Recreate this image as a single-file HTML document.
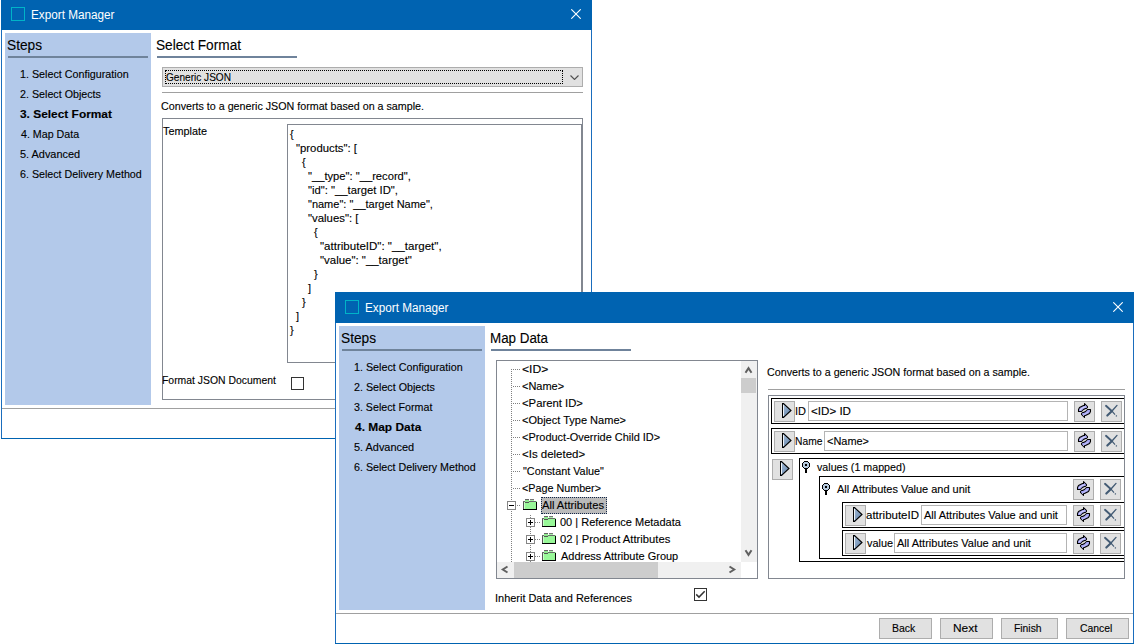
<!DOCTYPE html><html><head><meta charset="utf-8"><style>
html,body{margin:0;padding:0;background:#fff;width:1134px;height:644px;overflow:hidden;position:relative}
.a{position:absolute}
.t{white-space:pre;font-family:'Liberation Sans',sans-serif;font-size:11px;line-height:20px;color:#000;transform-origin:0 0;-webkit-text-stroke:0.12px currentColor}
</style></head><body>
<div class="a" style="left:1px;top:-1px;width:591px;height:440px;background:#fff;"></div>
<div class="a" style="left:1px;top:-1px;width:591px;height:31px;background:#0063b1;"></div>
<div class="a" style="left:1px;top:30px;width:1px;height:409px;background:#1a6dbd;"></div>
<div class="a" style="left:591px;top:30px;width:1px;height:409px;background:#1a6dbd;"></div>
<div class="a" style="left:1px;top:438px;width:591px;height:1px;background:#0063b1;"></div>
<div class="a" style="left:11px;top:7px;width:14px;height:14px;box-sizing:border-box;border:1px solid #00b4c8;"></div>
<div class="a t" style="left:31px;top:5px;font-size:12px;color:#fff;-webkit-text-stroke:0px currentColor;transform:scaleX(0.9782);">Export Manager</div>
<svg class="a" style="left:571px;top:9px;" width="10" height="10" viewBox="0 0 10 10"><path d="M0.3 0.3L9.7 9.7M9.7 0.3L0.3 9.7" stroke="#fff" stroke-width="1.1"/></svg>
<div class="a" style="left:5px;top:33px;width:146px;height:372px;background:#b3c9ea;"></div>
<div class="a t" style="left:7px;top:35px;font-size:14px;transform:scaleX(0.9777);">Steps</div>
<div class="a" style="left:8px;top:56px;width:140px;height:2px;background:#6f839b;"></div>
<div class="a t" style="left:20px;top:64px;transform:scaleX(0.9760);">1. Select Configuration</div>
<div class="a t" style="left:20px;top:84px;transform:scaleX(0.9733);">2. Select Objects</div>
<div class="a t" style="left:20px;top:104px;font-weight:bold;transform:scaleX(1.0820);">3. Select Format</div>
<div class="a t" style="left:21px;top:124px;transform:scaleX(0.9705);">4. Map Data</div>
<div class="a t" style="left:20px;top:144px;transform:scaleX(0.9932);">5. Advanced</div>
<div class="a t" style="left:20px;top:164px;transform:scaleX(0.9712);">6. Select Delivery Method</div>
<div class="a" style="left:2px;top:408px;width:589px;height:1px;background:#a0a0a0;"></div>
<div class="a t" style="left:156px;top:35px;font-size:14px;transform:scaleX(0.9758);">Select Format</div>
<div class="a" style="left:157px;top:56px;width:140px;height:2px;background:#6f839b;"></div>
<div class="a" style="left:162px;top:67px;width:421px;height:20px;background:#e1e1e1;box-sizing:border-box;border:1px solid #adadad;"></div>
<div class="a" style="left:165px;top:70px;width:398px;height:14px;box-sizing:border-box;border:1px dotted #000;"></div>
<div class="a t" style="left:166px;top:67px;transform:scaleX(0.9163);">Generic JSON</div>
<svg class="a" style="left:570px;top:75px;" width="9" height="5" viewBox="0 0 9 5"><path d="M0.5 0.5L4.5 4.5L8.5 0.5" stroke="#505050" stroke-width="1.1" fill="none"/></svg>
<div class="a" style="left:162px;top:92px;width:421px;height:1px;background:#a0a0a0;"></div>
<div class="a t" style="left:161px;top:96px;transform:scaleX(0.9732);">Converts to a generic JSON format based on a sample.</div>
<div class="a" style="left:162px;top:118px;width:421px;height:282px;box-sizing:border-box;border:1px solid #828790;"></div>
<div class="a t" style="left:163px;top:121px;transform:scaleX(0.9853);">Template</div>
<div class="a" style="left:287px;top:124px;width:295px;height:239px;background:#fff;box-sizing:border-box;border:1px solid #828790;"></div>
<div class="a t" style="left:290px;top:124px;">{</div>
<div class="a t" style="left:296px;top:138px;transform:scaleX(1.0301);">&quot;products&quot;: [</div>
<div class="a t" style="left:302px;top:152px;">{</div>
<div class="a t" style="left:308px;top:166px;transform:scaleX(1.0167);">&quot;__type&quot;: &quot;__record&quot;,</div>
<div class="a t" style="left:308px;top:180px;transform:scaleX(1.0245);">&quot;id&quot;: &quot;__target ID&quot;,</div>
<div class="a t" style="left:308px;top:194px;transform:scaleX(0.9988);">&quot;name&quot;: &quot;__target Name&quot;,</div>
<div class="a t" style="left:308px;top:208px;transform:scaleX(1.0346);">&quot;values&quot;: [</div>
<div class="a t" style="left:314px;top:222px;">{</div>
<div class="a t" style="left:320px;top:236px;transform:scaleX(1.0491);">&quot;attributeID&quot;: &quot;__target&quot;,</div>
<div class="a t" style="left:320px;top:250px;transform:scaleX(1.0399);">&quot;value&quot;: &quot;__target&quot;</div>
<div class="a t" style="left:314px;top:264px;">}</div>
<div class="a t" style="left:308px;top:278px;">]</div>
<div class="a t" style="left:302px;top:292px;">}</div>
<div class="a t" style="left:296px;top:306px;">]</div>
<div class="a t" style="left:290px;top:320px;">}</div>
<div class="a t" style="left:162px;top:370px;transform:scaleX(0.9463);">Format JSON Document</div>
<div class="a" style="left:291px;top:377px;width:13px;height:13px;background:#fff;box-sizing:border-box;border:1px solid #333;"></div>
<div class="a" style="left:335px;top:292px;width:799px;height:352px;background:#fff;"></div>
<div class="a" style="left:335px;top:292px;width:799px;height:31px;background:#0063b1;"></div>
<div class="a" style="left:335px;top:323px;width:1px;height:321px;background:#1a6dbd;"></div>
<div class="a" style="left:1133px;top:323px;width:1px;height:321px;background:#1a6dbd;"></div>
<div class="a" style="left:335px;top:643px;width:799px;height:1px;background:#0063b1;"></div>
<div class="a" style="left:345px;top:300px;width:14px;height:14px;box-sizing:border-box;border:1px solid #00b4c8;"></div>
<div class="a t" style="left:365px;top:298px;font-size:12px;color:#fff;-webkit-text-stroke:0px currentColor;transform:scaleX(0.9782);">Export Manager</div>
<svg class="a" style="left:1113px;top:302px;" width="10" height="10" viewBox="0 0 10 10"><path d="M0.3 0.3L9.7 9.7M9.7 0.3L0.3 9.7" stroke="#fff" stroke-width="1.1"/></svg>
<div class="a" style="left:339px;top:326px;width:146px;height:284px;background:#b3c9ea;"></div>
<div class="a t" style="left:341px;top:328px;font-size:14px;transform:scaleX(0.9777);">Steps</div>
<div class="a" style="left:342px;top:349px;width:140px;height:2px;background:#6f839b;"></div>
<div class="a t" style="left:354px;top:357px;transform:scaleX(0.9760);">1. Select Configuration</div>
<div class="a t" style="left:354px;top:377px;transform:scaleX(0.9733);">2. Select Objects</div>
<div class="a t" style="left:354px;top:397px;transform:scaleX(0.9709);">3. Select Format</div>
<div class="a t" style="left:355px;top:417px;font-weight:bold;transform:scaleX(1.0841);">4. Map Data</div>
<div class="a t" style="left:354px;top:437px;transform:scaleX(0.9932);">5. Advanced</div>
<div class="a t" style="left:354px;top:457px;transform:scaleX(0.9712);">6. Select Delivery Method</div>
<div class="a" style="left:336px;top:613px;width:797px;height:1px;background:#a0a0a0;"></div>
<div class="a t" style="left:490px;top:328px;font-size:14px;transform:scaleX(0.9560);">Map Data</div>
<div class="a" style="left:491px;top:349px;width:140px;height:2px;background:#6f839b;"></div>
<div class="a" style="left:496px;top:360px;width:262px;height:219px;background:#fff;box-sizing:border-box;border:1px solid #828790;"></div>
<div class="a" style="left:497px;top:361px;width:244px;height:201px;overflow:hidden">
<div class="a" style="left:14px;top:8px;width:1px;height:193px;background:repeating-linear-gradient(#808080 0 1px,transparent 1px 2px)"></div>
<div class="a" style="left:16px;top:8px;width:7px;height:1px;background:repeating-linear-gradient(90deg,#808080 0 1px,transparent 1px 2px)"></div>
<div class="a t" style="left:25px;top:-2px;transform:scaleX(1.1030);">&lt;ID&gt;</div>
<div class="a" style="left:16px;top:25px;width:7px;height:1px;background:repeating-linear-gradient(90deg,#808080 0 1px,transparent 1px 2px)"></div>
<div class="a t" style="left:25px;top:15px;transform:scaleX(0.9979);">&lt;Name&gt;</div>
<div class="a" style="left:16px;top:42px;width:7px;height:1px;background:repeating-linear-gradient(90deg,#808080 0 1px,transparent 1px 2px)"></div>
<div class="a t" style="left:25px;top:32px;transform:scaleX(1.0279);">&lt;Parent ID&gt;</div>
<div class="a" style="left:16px;top:59px;width:7px;height:1px;background:repeating-linear-gradient(90deg,#808080 0 1px,transparent 1px 2px)"></div>
<div class="a t" style="left:25px;top:49px;transform:scaleX(1.0021);">&lt;Object Type Name&gt;</div>
<div class="a" style="left:16px;top:76px;width:7px;height:1px;background:repeating-linear-gradient(90deg,#808080 0 1px,transparent 1px 2px)"></div>
<div class="a t" style="left:25px;top:66px;transform:scaleX(0.9956);">&lt;Product-Override Child ID&gt;</div>
<div class="a" style="left:16px;top:93px;width:7px;height:1px;background:repeating-linear-gradient(90deg,#808080 0 1px,transparent 1px 2px)"></div>
<div class="a t" style="left:25px;top:83px;transform:scaleX(1.0430);">&lt;Is deleted&gt;</div>
<div class="a" style="left:16px;top:110px;width:7px;height:1px;background:repeating-linear-gradient(90deg,#808080 0 1px,transparent 1px 2px)"></div>
<div class="a t" style="left:26px;top:100px;transform:scaleX(0.9844);">&quot;Constant Value&quot;</div>
<div class="a" style="left:16px;top:127px;width:7px;height:1px;background:repeating-linear-gradient(90deg,#808080 0 1px,transparent 1px 2px)"></div>
<div class="a t" style="left:25px;top:117px;transform:scaleX(0.9783);">&lt;Page Number&gt;</div>
<div class="a" style="left:10px;top:140px;width:9px;height:9px;background:#fff;box-sizing:border-box;border:1px solid #858585;"></div>
<div class="a" style="left:12px;top:144px;width:5px;height:1px;background:#000;"></div>
<div class="a" style="left:20px;top:144px;width:4px;height:1px;background:repeating-linear-gradient(90deg,#808080 0 1px,transparent 1px 2px)"></div>
<svg class="a" style="left:26px;top:138px;shape-rendering:crispEdges" width="14" height="11" viewBox="0 0 14 11"><rect x="0" y="2" width="14" height="9" fill="#98f898"/><rect x="1" y="3" width="1" height="7" fill="#c8ffc8"/><rect x="0" y="2" width="1" height="9" fill="#555"/><rect x="0" y="2" width="13" height="1" fill="#6a6a6a"/><rect x="13" y="3" width="1" height="8" fill="#000"/><rect x="0" y="10" width="14" height="1" fill="#000"/><rect x="2" y="0" width="4" height="1" fill="#666"/><rect x="2" y="1" width="4" height="2" fill="#8ee88e"/><rect x="2" y="3" width="4" height="1" fill="#555"/><rect x="7" y="0" width="4" height="1" fill="#777"/><rect x="7" y="1" width="4" height="1" fill="#a8f0a8"/></svg>
<div class="a" style="left:44px;top:136px;width:66px;height:17px;background:#bababa;box-sizing:border-box;border:1px dotted #14284a;"></div>
<div class="a t" style="left:45px;top:134px;transform:scaleX(1.0135);">All Attributes</div>
<div class="a" style="left:33px;top:154px;width:1px;height:47px;background:repeating-linear-gradient(#808080 0 1px,transparent 1px 2px)"></div>
<div class="a" style="left:29px;top:157px;width:9px;height:9px;background:#fff;box-sizing:border-box;border:1px solid #858585;"></div>
<div class="a" style="left:31px;top:161px;width:5px;height:1px;background:#000;"></div>
<div class="a" style="left:33px;top:159px;width:1px;height:5px;background:#000;"></div>
<div class="a" style="left:38px;top:161px;width:5px;height:1px;background:repeating-linear-gradient(90deg,#808080 0 1px,transparent 1px 2px)"></div>
<svg class="a" style="left:45px;top:155px;shape-rendering:crispEdges" width="14" height="11" viewBox="0 0 14 11"><rect x="0" y="2" width="14" height="9" fill="#98f898"/><rect x="1" y="3" width="1" height="7" fill="#c8ffc8"/><rect x="0" y="2" width="1" height="9" fill="#555"/><rect x="0" y="2" width="13" height="1" fill="#6a6a6a"/><rect x="13" y="3" width="1" height="8" fill="#000"/><rect x="0" y="10" width="14" height="1" fill="#000"/><rect x="2" y="0" width="4" height="1" fill="#666"/><rect x="2" y="1" width="4" height="2" fill="#8ee88e"/><rect x="2" y="3" width="4" height="1" fill="#555"/><rect x="7" y="0" width="4" height="1" fill="#777"/><rect x="7" y="1" width="4" height="1" fill="#a8f0a8"/></svg>
<div class="a t" style="left:63px;top:151px;transform:scaleX(1.0001);">00 | Reference Metadata</div>
<div class="a" style="left:29px;top:174px;width:9px;height:9px;background:#fff;box-sizing:border-box;border:1px solid #858585;"></div>
<div class="a" style="left:31px;top:178px;width:5px;height:1px;background:#000;"></div>
<div class="a" style="left:33px;top:176px;width:1px;height:5px;background:#000;"></div>
<div class="a" style="left:38px;top:178px;width:5px;height:1px;background:repeating-linear-gradient(90deg,#808080 0 1px,transparent 1px 2px)"></div>
<svg class="a" style="left:45px;top:172px;shape-rendering:crispEdges" width="14" height="11" viewBox="0 0 14 11"><rect x="0" y="2" width="14" height="9" fill="#98f898"/><rect x="1" y="3" width="1" height="7" fill="#c8ffc8"/><rect x="0" y="2" width="1" height="9" fill="#555"/><rect x="0" y="2" width="13" height="1" fill="#6a6a6a"/><rect x="13" y="3" width="1" height="8" fill="#000"/><rect x="0" y="10" width="14" height="1" fill="#000"/><rect x="2" y="0" width="4" height="1" fill="#666"/><rect x="2" y="1" width="4" height="2" fill="#8ee88e"/><rect x="2" y="3" width="4" height="1" fill="#555"/><rect x="7" y="0" width="4" height="1" fill="#777"/><rect x="7" y="1" width="4" height="1" fill="#a8f0a8"/></svg>
<div class="a t" style="left:63px;top:168px;transform:scaleX(1.0210);">02 | Product Attributes</div>
<div class="a" style="left:29px;top:191px;width:9px;height:9px;background:#fff;box-sizing:border-box;border:1px solid #858585;"></div>
<div class="a" style="left:31px;top:195px;width:5px;height:1px;background:#000;"></div>
<div class="a" style="left:33px;top:193px;width:1px;height:5px;background:#000;"></div>
<div class="a" style="left:38px;top:195px;width:5px;height:1px;background:repeating-linear-gradient(90deg,#808080 0 1px,transparent 1px 2px)"></div>
<svg class="a" style="left:45px;top:189px;shape-rendering:crispEdges" width="14" height="11" viewBox="0 0 14 11"><rect x="0" y="2" width="14" height="9" fill="#98f898"/><rect x="1" y="3" width="1" height="7" fill="#c8ffc8"/><rect x="0" y="2" width="1" height="9" fill="#555"/><rect x="0" y="2" width="13" height="1" fill="#6a6a6a"/><rect x="13" y="3" width="1" height="8" fill="#000"/><rect x="0" y="10" width="14" height="1" fill="#000"/><rect x="2" y="0" width="4" height="1" fill="#666"/><rect x="2" y="1" width="4" height="2" fill="#8ee88e"/><rect x="2" y="3" width="4" height="1" fill="#555"/><rect x="7" y="0" width="4" height="1" fill="#777"/><rect x="7" y="1" width="4" height="1" fill="#a8f0a8"/></svg>
<div class="a t" style="left:64px;top:185px;transform:scaleX(0.9984);">Address Attribute Group</div>
</div>
<div class="a" style="left:741px;top:361px;width:16px;height:201px;background:#f0f0f0;"></div>
<div class="a" style="left:741px;top:378px;width:15px;height:15px;background:#cdcdcd;"></div>
<div class="a" style="left:497px;top:562px;width:244px;height:16px;background:#f0f0f0;"></div>
<div class="a" style="left:514px;top:562px;width:144px;height:16px;background:#cdcdcd;"></div>
<svg class="a" style="left:741px;top:361px;" width="16" height="16" viewBox="0 0 16 16"><path d="M4.5 11.8L7.5 7.2L10.5 11.8" stroke="#606060" stroke-width="2" fill="none"/></svg>
<svg class="a" style="left:741px;top:545px;" width="16" height="16" viewBox="0 0 16 16"><path d="M4.5 5.2L7.5 9.8L10.5 5.2" stroke="#606060" stroke-width="2" fill="none"/></svg>
<svg class="a" style="left:497px;top:562px;" width="16" height="16" viewBox="0 0 16 16"><path d="M10.5 4.5L5.8 7.5L10.5 10.5" stroke="#606060" stroke-width="2" fill="none"/></svg>
<svg class="a" style="left:725px;top:562px;" width="16" height="16" viewBox="0 0 16 16"><path d="M4.5 4.5L9.2 7.5L4.5 10.5" stroke="#606060" stroke-width="2" fill="none"/></svg>
<div class="a t" style="left:495px;top:588px;transform:scaleX(0.9950);">Inherit Data and References</div>
<div class="a" style="left:694px;top:588px;width:13px;height:13px;background:#fff;box-sizing:border-box;border:1px solid #333;"></div>
<svg class="a" style="left:694px;top:588px;" width="13" height="13" viewBox="0 0 13 13"><path d="M2.2 6.4L5 9.1L10.7 3.3" stroke="#333" stroke-width="1.5" fill="none"/></svg>
<div class="a t" style="left:767px;top:362px;transform:scaleX(0.9732);">Converts to a generic JSON format based on a sample.</div>
<div class="a" style="left:768px;top:389px;width:357px;height:1px;background:#a0a0a0;"></div>
<div class="a" style="left:768px;top:395px;width:357px;height:184px;background:#fff;box-sizing:border-box;border:1px solid #828790;"></div>
<div class="a" style="left:769px;top:396px;width:355px;height:182px;overflow:hidden">
<div class="a" style="left:2px;top:2px;width:430px;height:26px;box-sizing:border-box;border:1px solid #000;"></div>
<div class="a" style="left:5px;top:5px;width:21px;height:21px;background:#e1e1e1;box-sizing:border-box;border:1px solid #adadad;"></div>
<svg class="a" style="left:13px;top:7px;" width="10" height="15" viewBox="0 0 10 15"><defs><linearGradient id="tg1" x1="0" y1="0" x2="1" y2="1"><stop offset="0" stop-color="#a8c0dc"/><stop offset="1" stop-color="#5f7fa4"/></linearGradient></defs><path d="M0.5 0.5L1.5 0.5L9 7.5L1.5 14.5L0.5 14.5Z" fill="url(#tg1)" stroke="#000" stroke-width="1.1" stroke-linejoin="miter"/><path d="M1.5 2L1.5 13" stroke="#eef3f8" stroke-width="1"/></svg>
<div class="a t" style="left:26px;top:5px;transform:scaleX(1.0000);">ID</div>
<div class="a" style="left:39px;top:5px;width:260px;height:20px;background:#fff;box-sizing:border-box;border:1px solid #b4b4b4;"></div>
<div class="a t" style="left:42px;top:5px;transform:scaleX(1.0552);">&lt;ID&gt; ID</div>
<div class="a" style="left:305px;top:5px;width:21px;height:21px;background:#e1e1e1;box-sizing:border-box;border:1px solid #adadad;"></div>
<svg class="a" style="left:305px;top:5px;" width="21" height="21" viewBox="0 0 21 21"><g transform="translate(2,0)"><path d="M2.5 10.5L2.5 8.5L3.5 6.5L5.5 5.5L7.5 4.5L8.5 4.5L8.5 2.5L11.5 5.5L11.5 6.5L10.5 7.5L9.5 7.5L7.5 8.5L6.5 9.5L5.5 10.5Z" fill="#a4a4f2" stroke="#000" stroke-width="1.05" stroke-linejoin="round"/><path d="M14.5 8.5L14.5 10.5L13.5 12.5L11.5 13.5L9.5 14.5L8.5 14.5L8.5 16.5L5.5 13.5L5.5 12.5L6.5 11.5L7.5 11.5L9.5 10.5L10.5 9.5L11.5 8.5Z" fill="#a4a4f2" stroke="#000" stroke-width="1.05" stroke-linejoin="round"/><path d="M4 9L7 6.5L9.5 5.8" stroke="#d8d8ff" stroke-width="1" fill="none"/><path d="M7 15L10 12.5L12.5 11" stroke="#d8d8ff" stroke-width="1" fill="none" opacity="0.6"/></g></svg>
<div class="a" style="left:332px;top:5px;width:21px;height:21px;background:#e1e1e1;box-sizing:border-box;border:1px solid #adadad;"></div>
<svg class="a" style="left:332px;top:5px;" width="21" height="21" viewBox="0 0 21 21"><g transform="translate(2,1)"><path d="M3 3.8L9 9.2" stroke="#435b74" stroke-width="1.9" stroke-linecap="round"/><path d="M9 9.2L14.6 15.4" stroke="#435b74" stroke-width="1.2" stroke-dasharray="4.5 1.3 1.3 1.3"/><path d="M14 3.4L9 9" stroke="#435b74" stroke-width="1.4" stroke-linecap="round"/><path d="M9 9L4.3 13.6" stroke="#435b74" stroke-width="2.1" stroke-linecap="round"/></g></svg>
<div class="a" style="left:2px;top:32px;width:430px;height:26px;box-sizing:border-box;border:1px solid #000;"></div>
<div class="a" style="left:5px;top:35px;width:21px;height:21px;background:#e1e1e1;box-sizing:border-box;border:1px solid #adadad;"></div>
<svg class="a" style="left:13px;top:37px;" width="10" height="15" viewBox="0 0 10 15"><defs><linearGradient id="tg2" x1="0" y1="0" x2="1" y2="1"><stop offset="0" stop-color="#a8c0dc"/><stop offset="1" stop-color="#5f7fa4"/></linearGradient></defs><path d="M0.5 0.5L1.5 0.5L9 7.5L1.5 14.5L0.5 14.5Z" fill="url(#tg2)" stroke="#000" stroke-width="1.1" stroke-linejoin="miter"/><path d="M1.5 2L1.5 13" stroke="#eef3f8" stroke-width="1"/></svg>
<div class="a t" style="left:26px;top:35px;transform:scaleX(0.9338);">Name</div>
<div class="a" style="left:55px;top:35px;width:244px;height:20px;background:#fff;box-sizing:border-box;border:1px solid #b4b4b4;"></div>
<div class="a t" style="left:58px;top:35px;transform:scaleX(0.9956);">&lt;Name&gt;</div>
<div class="a" style="left:305px;top:35px;width:21px;height:21px;background:#e1e1e1;box-sizing:border-box;border:1px solid #adadad;"></div>
<svg class="a" style="left:305px;top:35px;" width="21" height="21" viewBox="0 0 21 21"><g transform="translate(2,0)"><path d="M2.5 10.5L2.5 8.5L3.5 6.5L5.5 5.5L7.5 4.5L8.5 4.5L8.5 2.5L11.5 5.5L11.5 6.5L10.5 7.5L9.5 7.5L7.5 8.5L6.5 9.5L5.5 10.5Z" fill="#a4a4f2" stroke="#000" stroke-width="1.05" stroke-linejoin="round"/><path d="M14.5 8.5L14.5 10.5L13.5 12.5L11.5 13.5L9.5 14.5L8.5 14.5L8.5 16.5L5.5 13.5L5.5 12.5L6.5 11.5L7.5 11.5L9.5 10.5L10.5 9.5L11.5 8.5Z" fill="#a4a4f2" stroke="#000" stroke-width="1.05" stroke-linejoin="round"/><path d="M4 9L7 6.5L9.5 5.8" stroke="#d8d8ff" stroke-width="1" fill="none"/><path d="M7 15L10 12.5L12.5 11" stroke="#d8d8ff" stroke-width="1" fill="none" opacity="0.6"/></g></svg>
<div class="a" style="left:332px;top:35px;width:21px;height:21px;background:#e1e1e1;box-sizing:border-box;border:1px solid #adadad;"></div>
<svg class="a" style="left:332px;top:35px;" width="21" height="21" viewBox="0 0 21 21"><g transform="translate(2,1)"><path d="M3 3.8L9 9.2" stroke="#435b74" stroke-width="1.9" stroke-linecap="round"/><path d="M9 9.2L14.6 15.4" stroke="#435b74" stroke-width="1.2" stroke-dasharray="4.5 1.3 1.3 1.3"/><path d="M14 3.4L9 9" stroke="#435b74" stroke-width="1.4" stroke-linecap="round"/><path d="M9 9L4.3 13.6" stroke="#435b74" stroke-width="2.1" stroke-linecap="round"/></g></svg>
<div class="a" style="left:3px;top:63px;width:21px;height:21px;background:#e1e1e1;box-sizing:border-box;border:1px solid #adadad;"></div>
<svg class="a" style="left:11px;top:65px;" width="10" height="15" viewBox="0 0 10 15"><defs><linearGradient id="tg3" x1="0" y1="0" x2="1" y2="1"><stop offset="0" stop-color="#a8c0dc"/><stop offset="1" stop-color="#5f7fa4"/></linearGradient></defs><path d="M0.5 0.5L1.5 0.5L9 7.5L1.5 14.5L0.5 14.5Z" fill="url(#tg3)" stroke="#000" stroke-width="1.1" stroke-linejoin="miter"/><path d="M1.5 2L1.5 13" stroke="#eef3f8" stroke-width="1"/></svg>
<div class="a" style="left:30px;top:62px;width:402px;height:104px;box-sizing:border-box;border:1px solid #000;"></div>
<svg class="a" style="left:33px;top:65px;shape-rendering:crispEdges" width="8" height="12" viewBox="0 0 8 12"><path d="M2 0h4v1h1v1h1v4h-1v1h-1v1h-4v-1h-1v-1h-1v-4h1v-1h1z" fill="#000"/><path d="M2 1h4v1h1v4h-1v1h-4v-1h-1v-4h1z" fill="#b4c8dc"/><rect x="3" y="3" width="2" height="2" fill="#000"/><rect x="3" y="8" width="2" height="4" fill="#000"/></svg>
<div class="a t" style="left:48px;top:61px;transform:scaleX(0.9709);">values (1 mapped)</div>
<div class="a" style="left:50px;top:80px;width:305px;height:83px;box-sizing:border-box;border:1px solid #000;border-right:none;"></div>
<svg class="a" style="left:53px;top:87px;shape-rendering:crispEdges" width="8" height="12" viewBox="0 0 8 12"><path d="M2 0h4v1h1v1h1v4h-1v1h-1v1h-4v-1h-1v-1h-1v-4h1v-1h1z" fill="#000"/><path d="M2 1h4v1h1v4h-1v1h-4v-1h-1v-4h1z" fill="#b4c8dc"/><rect x="3" y="3" width="2" height="2" fill="#000"/><rect x="3" y="8" width="2" height="4" fill="#000"/></svg>
<div class="a t" style="left:68px;top:83px;transform:scaleX(0.9968);">All Attributes Value and unit</div>
<div class="a" style="left:304px;top:83px;width:21px;height:21px;background:#e1e1e1;box-sizing:border-box;border:1px solid #adadad;"></div>
<svg class="a" style="left:304px;top:83px;" width="21" height="21" viewBox="0 0 21 21"><g transform="translate(2,0)"><path d="M2.5 10.5L2.5 8.5L3.5 6.5L5.5 5.5L7.5 4.5L8.5 4.5L8.5 2.5L11.5 5.5L11.5 6.5L10.5 7.5L9.5 7.5L7.5 8.5L6.5 9.5L5.5 10.5Z" fill="#a4a4f2" stroke="#000" stroke-width="1.05" stroke-linejoin="round"/><path d="M14.5 8.5L14.5 10.5L13.5 12.5L11.5 13.5L9.5 14.5L8.5 14.5L8.5 16.5L5.5 13.5L5.5 12.5L6.5 11.5L7.5 11.5L9.5 10.5L10.5 9.5L11.5 8.5Z" fill="#a4a4f2" stroke="#000" stroke-width="1.05" stroke-linejoin="round"/><path d="M4 9L7 6.5L9.5 5.8" stroke="#d8d8ff" stroke-width="1" fill="none"/><path d="M7 15L10 12.5L12.5 11" stroke="#d8d8ff" stroke-width="1" fill="none" opacity="0.6"/></g></svg>
<div class="a" style="left:331px;top:83px;width:21px;height:21px;background:#e1e1e1;box-sizing:border-box;border:1px solid #adadad;"></div>
<svg class="a" style="left:331px;top:83px;" width="21" height="21" viewBox="0 0 21 21"><g transform="translate(2,1)"><path d="M3 3.8L9 9.2" stroke="#435b74" stroke-width="1.9" stroke-linecap="round"/><path d="M9 9.2L14.6 15.4" stroke="#435b74" stroke-width="1.2" stroke-dasharray="4.5 1.3 1.3 1.3"/><path d="M14 3.4L9 9" stroke="#435b74" stroke-width="1.4" stroke-linecap="round"/><path d="M9 9L4.3 13.6" stroke="#435b74" stroke-width="2.1" stroke-linecap="round"/></g></svg>
<div class="a" style="left:73px;top:106px;width:359px;height:26px;box-sizing:border-box;border:1px solid #000;"></div>
<div class="a" style="left:76px;top:109px;width:21px;height:21px;background:#e1e1e1;box-sizing:border-box;border:1px solid #adadad;"></div>
<svg class="a" style="left:84px;top:111px;" width="10" height="15" viewBox="0 0 10 15"><defs><linearGradient id="tg4" x1="0" y1="0" x2="1" y2="1"><stop offset="0" stop-color="#a8c0dc"/><stop offset="1" stop-color="#5f7fa4"/></linearGradient></defs><path d="M0.5 0.5L1.5 0.5L9 7.5L1.5 14.5L0.5 14.5Z" fill="url(#tg4)" stroke="#000" stroke-width="1.1" stroke-linejoin="miter"/><path d="M1.5 2L1.5 13" stroke="#eef3f8" stroke-width="1"/></svg>
<div class="a t" style="left:97px;top:109px;transform:scaleX(1.0437);">attributeID</div>
<div class="a" style="left:152px;top:109px;width:146px;height:20px;background:#fff;box-sizing:border-box;border:1px solid #b4b4b4;"></div>
<div class="a t" style="left:155px;top:109px;transform:scaleX(1.0013);">All Attributes Value and unit</div>
<div class="a" style="left:304px;top:109px;width:21px;height:21px;background:#e1e1e1;box-sizing:border-box;border:1px solid #adadad;"></div>
<svg class="a" style="left:304px;top:109px;" width="21" height="21" viewBox="0 0 21 21"><g transform="translate(2,0)"><path d="M2.5 10.5L2.5 8.5L3.5 6.5L5.5 5.5L7.5 4.5L8.5 4.5L8.5 2.5L11.5 5.5L11.5 6.5L10.5 7.5L9.5 7.5L7.5 8.5L6.5 9.5L5.5 10.5Z" fill="#a4a4f2" stroke="#000" stroke-width="1.05" stroke-linejoin="round"/><path d="M14.5 8.5L14.5 10.5L13.5 12.5L11.5 13.5L9.5 14.5L8.5 14.5L8.5 16.5L5.5 13.5L5.5 12.5L6.5 11.5L7.5 11.5L9.5 10.5L10.5 9.5L11.5 8.5Z" fill="#a4a4f2" stroke="#000" stroke-width="1.05" stroke-linejoin="round"/><path d="M4 9L7 6.5L9.5 5.8" stroke="#d8d8ff" stroke-width="1" fill="none"/><path d="M7 15L10 12.5L12.5 11" stroke="#d8d8ff" stroke-width="1" fill="none" opacity="0.6"/></g></svg>
<div class="a" style="left:331px;top:109px;width:21px;height:21px;background:#e1e1e1;box-sizing:border-box;border:1px solid #adadad;"></div>
<svg class="a" style="left:331px;top:109px;" width="21" height="21" viewBox="0 0 21 21"><g transform="translate(2,1)"><path d="M3 3.8L9 9.2" stroke="#435b74" stroke-width="1.9" stroke-linecap="round"/><path d="M9 9.2L14.6 15.4" stroke="#435b74" stroke-width="1.2" stroke-dasharray="4.5 1.3 1.3 1.3"/><path d="M14 3.4L9 9" stroke="#435b74" stroke-width="1.4" stroke-linecap="round"/><path d="M9 9L4.3 13.6" stroke="#435b74" stroke-width="2.1" stroke-linecap="round"/></g></svg>
<div class="a" style="left:73px;top:134px;width:359px;height:26px;box-sizing:border-box;border:1px solid #000;"></div>
<div class="a" style="left:76px;top:137px;width:21px;height:21px;background:#e1e1e1;box-sizing:border-box;border:1px solid #adadad;"></div>
<svg class="a" style="left:84px;top:139px;" width="10" height="15" viewBox="0 0 10 15"><defs><linearGradient id="tg5" x1="0" y1="0" x2="1" y2="1"><stop offset="0" stop-color="#a8c0dc"/><stop offset="1" stop-color="#5f7fa4"/></linearGradient></defs><path d="M0.5 0.5L1.5 0.5L9 7.5L1.5 14.5L0.5 14.5Z" fill="url(#tg5)" stroke="#000" stroke-width="1.1" stroke-linejoin="miter"/><path d="M1.5 2L1.5 13" stroke="#eef3f8" stroke-width="1"/></svg>
<div class="a t" style="left:98px;top:137px;transform:scaleX(0.9881);">value</div>
<div class="a" style="left:125px;top:137px;width:173px;height:20px;background:#fff;box-sizing:border-box;border:1px solid #b4b4b4;"></div>
<div class="a t" style="left:128px;top:137px;transform:scaleX(1.0013);">All Attributes Value and unit</div>
<div class="a" style="left:304px;top:137px;width:21px;height:21px;background:#e1e1e1;box-sizing:border-box;border:1px solid #adadad;"></div>
<svg class="a" style="left:304px;top:137px;" width="21" height="21" viewBox="0 0 21 21"><g transform="translate(2,0)"><path d="M2.5 10.5L2.5 8.5L3.5 6.5L5.5 5.5L7.5 4.5L8.5 4.5L8.5 2.5L11.5 5.5L11.5 6.5L10.5 7.5L9.5 7.5L7.5 8.5L6.5 9.5L5.5 10.5Z" fill="#a4a4f2" stroke="#000" stroke-width="1.05" stroke-linejoin="round"/><path d="M14.5 8.5L14.5 10.5L13.5 12.5L11.5 13.5L9.5 14.5L8.5 14.5L8.5 16.5L5.5 13.5L5.5 12.5L6.5 11.5L7.5 11.5L9.5 10.5L10.5 9.5L11.5 8.5Z" fill="#a4a4f2" stroke="#000" stroke-width="1.05" stroke-linejoin="round"/><path d="M4 9L7 6.5L9.5 5.8" stroke="#d8d8ff" stroke-width="1" fill="none"/><path d="M7 15L10 12.5L12.5 11" stroke="#d8d8ff" stroke-width="1" fill="none" opacity="0.6"/></g></svg>
<div class="a" style="left:331px;top:137px;width:21px;height:21px;background:#e1e1e1;box-sizing:border-box;border:1px solid #adadad;"></div>
<svg class="a" style="left:331px;top:137px;" width="21" height="21" viewBox="0 0 21 21"><g transform="translate(2,1)"><path d="M3 3.8L9 9.2" stroke="#435b74" stroke-width="1.9" stroke-linecap="round"/><path d="M9 9.2L14.6 15.4" stroke="#435b74" stroke-width="1.2" stroke-dasharray="4.5 1.3 1.3 1.3"/><path d="M14 3.4L9 9" stroke="#435b74" stroke-width="1.4" stroke-linecap="round"/><path d="M9 9L4.3 13.6" stroke="#435b74" stroke-width="2.1" stroke-linecap="round"/></g></svg>
</div>
<div class="a" style="left:879px;top:618px;width:53px;height:21px;background:#e1e1e1;box-sizing:border-box;border:1px solid #adadad;"></div>
<div class="a t" style="left:892px;top:618px;transform:scaleX(0.9522);">Back</div>
<div class="a" style="left:940px;top:618px;width:53px;height:21px;background:#e1e1e1;box-sizing:border-box;border:1px solid #adadad;"></div>
<div class="a t" style="left:953px;top:618px;transform:scaleX(1.0829);">Next</div>
<div class="a" style="left:1001px;top:618px;width:57px;height:21px;background:#e1e1e1;box-sizing:border-box;border:1px solid #adadad;"></div>
<div class="a t" style="left:1014px;top:618px;transform:scaleX(0.9406);">Finish</div>
<div class="a" style="left:1066px;top:618px;width:63px;height:21px;background:#e1e1e1;box-sizing:border-box;border:1px solid #adadad;"></div>
<div class="a t" style="left:1080px;top:618px;transform:scaleX(0.9460);">Cancel</div>
</body></html>
